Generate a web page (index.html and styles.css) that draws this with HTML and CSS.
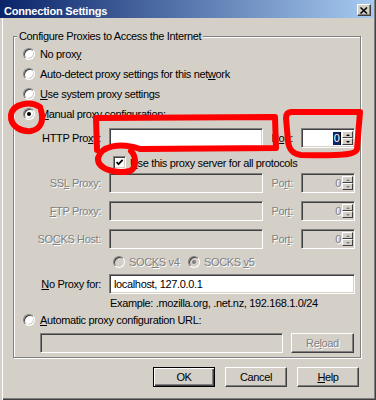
FILE: index.html
```html
<!DOCTYPE html>
<html>
<head>
<meta charset="utf-8">
<link rel="stylesheet" href="styles.css">
</head>
<body>
<div class="window">
  <div class="titlebar">
    <span class="title">Connection Settings</span>
    <span class="close"><svg width="8" height="7" viewBox="0 0 8 7"><path d="M0.5 0.5 L7 6.5 M7 0.5 L0.5 6.5" stroke="#000" stroke-width="1.5" fill="none"/></svg></span>
  </div>
  <div class="content">
    <div class="group">
      <div class="legend">Configure Proxies to Access the Internet</div>
      <div class="opt first"><span class="radio"></span><span>No prox<u>y</u></span></div>
      <div class="opt"><span class="radio"></span><span>Auto-detect proxy settings for this net<u>w</u>ork</span></div>
      <div class="opt"><span class="radio"></span><span><u>U</u>se system proxy settings</span></div>
      <div class="opt"><span class="radio on"></span><span><u>M</u>anual proxy configuration:</span></div>

      <div class="frow http">
        <span class="lbl">HTTP Pro<u>x</u>y:</span>
        <span class="input"></span>
        <span class="plbl">P<u>o</u>rt:</span>
        <span class="port"><span class="pval"><span class="sel">0</span><span class="caret"></span></span><span class="spin"><span class="sb up"></span><span class="sb down"></span></span></span>
      </div>

      <div class="crow">
        <span class="check"><svg width="9" height="9" viewBox="0 0 9 9"><path d="M1.5 4 L3.5 6.2 L7.6 1.8" stroke="#000" stroke-width="1.7" fill="none"/></svg></span>
        <span><u>U</u>se this proxy server for all protocols</span>
      </div>

      <div class="frow dis ssl">
        <span class="lbl">SS<u>L</u> Proxy:</span>
        <span class="input off"></span>
        <span class="plbl">Po<u>r</u>t:</span>
        <span class="port off"><span class="pval">0</span><span class="spin"><span class="sb up"></span><span class="sb down"></span></span></span>
      </div>
      <div class="frow dis next">
        <span class="lbl"><u>F</u>TP Proxy:</span>
        <span class="input off"></span>
        <span class="plbl">Por<u>t</u>:</span>
        <span class="port off"><span class="pval">0</span><span class="spin"><span class="sb up"></span><span class="sb down"></span></span></span>
      </div>
      <div class="frow dis next">
        <span class="lbl">SO<u>C</u>KS Host:</span>
        <span class="input off"></span>
        <span class="plbl">Por<u>t</u>:</span>
        <span class="port off"><span class="pval">0</span><span class="spin"><span class="sb up"></span><span class="sb down"></span></span></span>
      </div>

      <div class="srow dis">
        <span class="sitem v4"><span class="radio off"></span><span>SOC<u>K</u>S v4</span></span>
        <span class="sitem"><span class="radio off on"></span><span>SOCKS <u>v</u>5</span></span>
      </div>

      <div class="frow noproxy">
        <span class="lbl"><u>N</u>o Proxy for:</span>
        <span class="input wide">localhost, 127.0.0.1</span>
      </div>
      <div class="example">Example: .mozilla.org, .net.nz, 192.168.1.0/24</div>

      <div class="opt"><span class="radio"></span><span><u>A</u>utomatic proxy configuration URL:</span></div>
      <div class="urow">
        <span class="input off url"></span>
        <span class="btn dis-btn">Re<u>l</u>oad</span>
      </div>
    </div>
    <div class="buttons">
      <span class="btn def">OK</span>
      <span class="btn">Cancel</span>
      <span class="btn"><u>H</u>elp</span>
    </div>
  </div>
  <svg class="marks" width="376" height="400" viewBox="0 0 376 400">
    <g stroke="#ff0000" stroke-width="6" fill="none" stroke-linecap="round" stroke-linejoin="round">
      <path d="M40 107 C31 101 13 103 11 115 C10 127 22 132 31 131 C41 129 44 121 41 110"/>
      <path d="M97 150 L96 118 L275 117 L276 148 L140 149 C120 142 101 146 98 158 C97 170 118 174 130 171 C137 168 136 156 131 151"/>
      <path d="M291 112 L360 112 L357 149 C356 155 340 156 301 155 C293 154 289 150 288 141 L286 118 C286 114 288 112 292 112"/>
    </g>
  </svg>
</div>
</body>
</html>
```
FILE: styles.css
```css
* { box-sizing: border-box; }
html, body { margin: 0; padding: 0; }
body {
  width: 376px;
  height: 400px;
  overflow: hidden;
  background: #d4d0c8;
  font-family: "Liberation Sans", Arial, sans-serif;
  font-size: 11px;
  letter-spacing: -0.35px;
  color: #000;
}
u { text-decoration: underline; text-underline-offset: 1px; }

.window {
  position: relative;
  width: 376px;
  height: 400px;
  background: #d4d0c8;
  box-shadow: inset 2px 0 0 #d4d0c8, inset 3px 0 0 #fff, inset -1px -1px 0 #404040, inset -2px -2px 0 #808080;
}

.titlebar {
  height: 18px;
  margin-right: 2px;
  padding: 0 3px 0 4px;
  display: flex;
  align-items: center;
  justify-content: space-between;
  background: linear-gradient(to right, #0a246a, #a6caf0);
}
.title {
  color: #fff;
  font-weight: bold;
  letter-spacing: -0.2px;
  margin-top: 3px;
}
.close {
  width: 14px;
  height: 12px;
  margin-top: 2px;
  background: #d4d0c8;
  border: 1px solid;
  border-color: #fff #404040 #404040 #fff;
  box-shadow: inset -1px -1px 0 #808080;
  display: flex;
  align-items: center;
  justify-content: center;
}
.close svg { display: block; }

.content { padding: 18px 0 0 13px; }

.group {
  width: 348px;
  height: 322px;
  border: 1px solid #808080;
  box-shadow: inset 1px 1px 0 #fff, 1px 1px 0 #fff;
  display: flex;
  flex-direction: column;
}
.legend {
  align-self: flex-start;
  margin: -8px 0 0 3px;
  padding: 0 2px;
  height: 14px;
  line-height: 14px;
  background: #d4d0c8;
}

.opt {
  height: 20px;
  display: flex;
  align-items: center;
  gap: 5px;
  padding-left: 9px;
}
.opt.first { margin-top: 1px; }

.radio {
  flex: none;
  position: relative;
  width: 12px;
  height: 12px;
  border-radius: 50%;
  background: #fff;
  border: 1px solid;
  border-color: #808080 #fff #fff #808080;
  box-shadow: inset 1px 1px 0 #404040, inset -1px -1px 0 #d4d0c8;
}
.radio.off { background: #d4d0c8; }
.radio.on::after {
  content: "";
  position: absolute;
  left: 3px;
  top: 3px;
  width: 4px;
  height: 4px;
  border-radius: 50%;
  background: #000;
}
.radio.off.on::after { background: #808080; }

.frow {
  display: flex;
  align-items: center;
  height: 20px;
}
.frow.http { margin-top: 4px; }
.frow.ssl { margin-top: 4px; }
.frow.next { margin-top: 8px; }
.frow.noproxy { margin-top: 6px; }

.lbl {
  width: 87px;
  margin-right: 8px;
  text-align: right;
  white-space: nowrap;
}
.plbl {
  width: 30px;
  margin-right: 8px;
  text-align: right;
}
.dis .lbl, .dis .plbl, .dis .sitem, .dis-btn {
  color: #808080;
  text-shadow: 1px 1px 0 #fff;
}

.input {
  flex: none;
  width: 154px;
  height: 20px;
  background: #fff;
  border: 1px solid;
  border-color: #808080 #fff #fff #808080;
  box-shadow: inset 1px 1px 0 #404040, inset -1px -1px 0 #d4d0c8;
  display: flex;
  align-items: center;
  padding-left: 4px;
  white-space: nowrap;
}
.input.off { background: #d4d0c8; }
.input.wide { width: 246px; }
.input.url { width: 243px; }

.port {
  flex: none;
  width: 54px;
  height: 20px;
  background: #fff;
  border: 1px solid;
  border-color: #808080 #fff #fff #808080;
  box-shadow: inset 1px 1px 0 #404040, inset -1px -1px 0 #d4d0c8;
  padding: 2px 1px 2px 2px;
  display: flex;
}
.port.off { background: #d4d0c8; }
.pval {
  flex: 1;
  display: flex;
  align-items: center;
  justify-content: flex-end;
  padding-right: 1px;
}
.port.off .pval { color: #808080; text-shadow: 1px 1px 0 #fff; }
.sel {
  background: #0a246a;
  color: #fff;
  height: 13px;
  line-height: 13px;
  padding: 0 0.5px;
}
.caret {
  width: 1px;
  height: 13px;
  background: #000;
}
.spin {
  width: 11px;
  display: flex;
  flex-direction: column;
}
.sb {
  flex: 1;
  background: #d4d0c8;
  border: 1px solid;
  border-color: #fff #404040 #404040 #fff;
  display: flex;
  align-items: center;
  justify-content: center;
}
.sb::after {
  content: "";
  border-left: 2px solid transparent;
  border-right: 2px solid transparent;
}
.sb.up::after { border-bottom: 2px solid #000; }
.sb.down::after { border-top: 2px solid #000; }
.port.off .sb.up::after { border-bottom-color: #808080; }
.port.off .sb.down::after { border-top-color: #808080; }

.crow {
  display: flex;
  align-items: center;
  height: 13px;
  margin-top: 8px;
  padding-left: 99px;
  gap: 4px;
}
.check {
  flex: none;
  width: 13px;
  height: 13px;
  background: #fff;
  border: 1px solid;
  border-color: #808080 #fff #fff #808080;
  box-shadow: inset 1px 1px 0 #404040, inset -1px -1px 0 #d4d0c8;
  display: flex;
  align-items: center;
  justify-content: center;
}
.check svg { display: block; }

.srow {
  display: flex;
  align-items: center;
  height: 12px;
  margin-top: 7px;
  padding-left: 99px;
}
.sitem {
  display: flex;
  align-items: center;
  gap: 4px;
}
.sitem.v4 { width: 75px; }

.example {
  height: 14px;
  line-height: 14px;
  margin-top: 2px;
  padding-left: 96px;
}

.urow {
  display: flex;
  align-items: center;
  gap: 8px;
  height: 20px;
  margin-top: 3px;
  padding-left: 26px;
}

.btn {
  flex: none;
  width: 62px;
  height: 20px;
  background: #d4d0c8;
  border: 1px solid;
  border-color: #fff #404040 #404040 #fff;
  box-shadow: inset -1px -1px 0 #808080;
  display: flex;
  align-items: center;
  justify-content: center;
}
.dis-btn { width: 63px; }
.btn.def {
  border-color: #000;
  box-shadow: inset 1px 1px 0 #fff, inset -1px -1px 0 #404040, inset -2px -2px 0 #808080;
}

.buttons {
  display: flex;
  justify-content: flex-end;
  gap: 10px;
  margin-top: 9px;
  padding-right: 17px;
}

.marks {
  position: absolute;
  left: 0;
  top: 0;
  pointer-events: none;
}
```
